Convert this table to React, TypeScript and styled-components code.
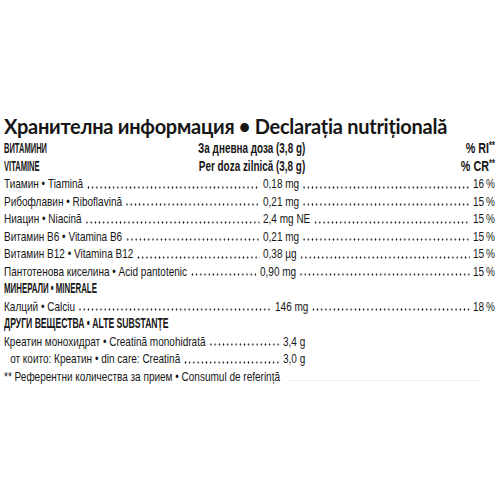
import React from 'react';
import styled, { createGlobalStyle } from 'styled-components';

// the printed label uses a condensed face; Liberation Sans is narrowed as a whole
const SQUEEZE = 0.77;
const toLayout = (x: number) => (x - 4) / SQUEEZE;

const GlobalStyle = createGlobalStyle`
  body {
    margin: 0;
    background: #ffffff;
    overflow: hidden;
  }
`;

interface IItem {
  label: string;
  value: string;
  pct?: string;
  valueAt?: number;
  indent?: boolean;
}

const vitamins: IItem[] = [
  { label: 'Тиамин • Tiamină', value: '0,18 mg', pct: '16\u202f%' },
  { label: 'Рибофлавин • Riboflavină', value: '0,21 mg', pct: '15\u202f%' },
  { label: 'Ниацин • Niacină', value: '2,4 mg NE', pct: '15\u202f%' },
  { label: 'Витамин B6 • Vitamina B6', value: '0,21 mg', pct: '15\u202f%' },
  { label: 'Витамин B12 • Vitamina B12', value: '0,38 µg', pct: '15\u202f%' },
  { label: 'Пантотенова киселина • Acid pantotenic', value: '0,90 mg', pct: '15\u202f%', valueAt: 260 },
];

const minerals: IItem[] = [{ label: 'Калций • Calciu', value: '146 mg', pct: '18\u202f%', valueAt: 275 }];

const others: IItem[] = [
  { label: 'Креатин монохидрат • Creatină monohidrată', value: '3,4 g', valueAt: 283 },
  { label: 'от които: Креатин • din care: Creatină', value: '3,0 g', valueAt: 283, indent: true },
];

const Page = styled.div`
  width: 500px;
  height: 500px;
  overflow: hidden;
  box-sizing: border-box;
  padding: 113px 5px 0 4px;
  color: #161616;
  font-family: 'Liberation Sans', Arial, sans-serif;
`;

const Title = styled.h1`
  margin: 0 0 1px;
  font-family: Lato, 'Open Sans', sans-serif;
  font-weight: 700;
  font-size: 20px;
  line-height: 26px;
  letter-spacing: -0.27px;
  white-space: nowrap;
`;

const Table = styled.div`
  display: flex;
  flex-direction: column;
  width: ${491 / SQUEEZE}px;
  transform: scaleX(${SQUEEZE});
  transform-origin: left top;
  font-size: 13px;
  line-height: 17.5px;
`;

const Bold = styled.span<{ $origin: 'left' | 'right'; $scale?: number }>`
  display: inline-block;
  white-space: nowrap;
  font-weight: 700;
  font-size: 14px;
  transform: scaleX(${props => props.$scale ?? 0.77});
  transform-origin: ${props => props.$origin} center;

  sup {
    font-size: 10px;
    line-height: 0;
    vertical-align: 4px;
  }
`;

const HeaderRow = styled.div`
  display: grid;
  grid-template-columns: 1fr auto ${190 / SQUEEZE}px;
  justify-items: start;

  & > :nth-child(3) {
    justify-self: end;
  }
`;

const Section = styled.div`
  display: flex;
`;

const Row = styled.div`
  display: flex;
  align-items: baseline;
`;

const LabelCell = styled.div<{ $width: number; $indent?: boolean }>`
  display: flex;
  align-items: baseline;
  flex: none;
  width: ${props => props.$width}px;
  padding-left: ${props => (props.$indent ? 8 : 0)}px;
  box-sizing: border-box;
`;

const Label = styled.span`
  white-space: nowrap;
`;

const Leader = styled.span`
  flex: 1;
  align-self: stretch;
  margin: 0 4px;
  background-image: radial-gradient(circle, #222 0.9px, transparent 1.2px);
  background-size: ${4.2 / SQUEEZE}px 3px;
  background-repeat: repeat-x;
  background-position: left bottom 4px;
`;

const Value = styled.span`
  white-space: nowrap;
`;

const Pct = styled.span`
  white-space: nowrap;
`;

const Footnote = styled.div`
  display: flex;
  align-items: baseline;

  &::after {
    content: '';
    flex: 1;
    margin: 0 20px 0 10px;
    border-bottom: 1px solid #f1f1f1;
  }
`;

const ItemRow: React.FC<{ item: IItem }> = ({ item }) => (
  <Row>
    <LabelCell $width={toLayout(item.valueAt ?? 263)} $indent={item.indent}>
      <Label>{item.label}</Label>
      <Leader />
    </LabelCell>
    <Value>{item.value}</Value>
    {item.pct && (
      <>
        <Leader />
        <Pct>{item.pct}</Pct>
      </>
    )}
  </Row>
);

const App: React.FC = () => (
  <Page>
    <GlobalStyle />
    <Title>Хранителна информация • Declarația nutrițională</Title>
    <Table>
      <HeaderRow>
        <Bold $origin='left' $scale={0.7}>
          ВИТАМИНИ
        </Bold>
        <Bold $origin='right' $scale={0.92}>
          За дневна доза (3,8 g)
        </Bold>
        <Bold $origin='right' $scale={1}>
          % RI<sup>**</sup>
        </Bold>
      </HeaderRow>
      <HeaderRow>
        <Bold $origin='left' $scale={0.7}>
          VITAMINE
        </Bold>
        <Bold $origin='right' $scale={0.92}>
          Per doza zilnică (3,8 g)
        </Bold>
        <Bold $origin='right' $scale={1}>
          % CR<sup>**</sup>
        </Bold>
      </HeaderRow>
      {vitamins.map(item => (
        <ItemRow key={item.label} item={item} />
      ))}
      <Section>
        <Bold $origin='left' $scale={0.73}>
          МИНЕРАЛИ • MINERALE
        </Bold>
      </Section>
      {minerals.map(item => (
        <ItemRow key={item.label} item={item} />
      ))}
      <Section>
        <Bold $origin='left' $scale={0.8}>
          ДРУГИ ВЕЩЕСТВА • ALTE SUBSTANȚE
        </Bold>
      </Section>
      {others.map(item => (
        <ItemRow key={item.label} item={item} />
      ))}
      <Footnote>** Референтни количества за прием • Consumul de referință</Footnote>
    </Table>
  </Page>
);

export default App;
